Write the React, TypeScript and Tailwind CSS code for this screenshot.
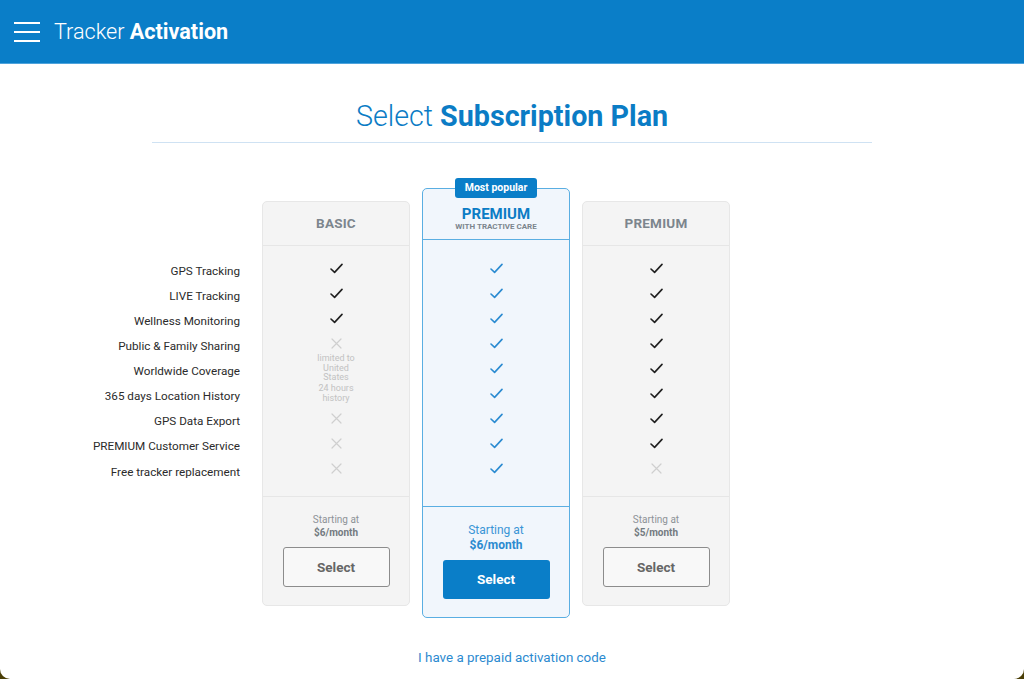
import { Fragment } from "react";

// plan comparison table for the tracker activation flow

type Cell = "check" | "cross" | string;

const features = [
    "GPS Tracking",
    "LIVE Tracking",
    "Wellness Monitoring",
    "Public & Family Sharing",
    "Worldwide Coverage",
    "365 days Location History",
    "GPS Data Export",
    "PREMIUM Customer Service",
    "Free tracker replacement",
];

const basic: Cell[] = ["check", "check", "check", "cross", "limited to United States", "24 hours history", "cross", "cross", "cross"];
const care: Cell[] = ["check", "check", "check", "check", "check", "check", "check", "check", "check"];
const premium: Cell[] = ["check", "check", "check", "check", "check", "check", "check", "check", "cross"];

function Check({ color }: { color: string }) {
    return (
        <svg width="13" height="11" viewBox="0 0 13 11" fill="none">
            <path d="M1 6 L4.6 9.4 L12 1.4" stroke={color} strokeWidth="1.6" strokeLinecap="round" strokeLinejoin="round" />
        </svg>
    );
}

function Cross() {
    return (
        <svg width="11" height="11" viewBox="0 0 11 11" fill="none">
            <path d="M1 1 L10 10 M10 1 L1 10" stroke="#cfcfcf" strokeWidth="1.2" strokeLinecap="round" />
        </svg>
    );
}

function CellView({ cell, highlight }: { cell: Cell; highlight?: boolean }) {
    return (
        <div className="h-[25.1px] flex items-center justify-center">
            <div className="-mt-[5px] flex items-center justify-center">
                {cell === "check" ? (
                    <Check color={highlight ? "#2b8bd1" : "#1f1f1f"} />
                ) : cell === "cross" ? (
                    <Cross />
                ) : (
                    <p className="w-[44px] text-center text-[9px] leading-[9.5px] text-[#c2c2c2]">{cell}</p>
                )}
            </div>
        </div>
    );
}

function PlanCard({ title, price, cells }: { title: string; price: string; cells: Cell[] }) {
    return (
        <div className="mt-[13px] w-[148px] bg-[#f4f4f4] border border-[#e7e7e7] rounded-[5px] flex flex-col">
            <div className="h-[44px] border-b border-[#e6e6e6] flex items-center justify-center">
                <span className="text-[13.5px] font-bold text-[#7c858d] tracking-[0.2px]">{title}</span>
            </div>
            <div className="pt-[12px] pb-[12px]">
                {cells.map((c, i) => (
                    <CellView key={i} cell={c} />
                ))}
            </div>
            <div className="border-t border-[#e6e6e6] h-[109px] flex flex-col items-center pt-[16px]">
                <p className="text-[10px] leading-[13px] text-[#8d9297]">Starting at</p>
                <p className="text-[10px] leading-[13px] font-bold text-[#737a80]">{price}</p>
                <button className="mt-[8px] w-[107px] h-[40px] border border-[#8c8c8c] rounded-[3px] bg-[#f8f8f8] text-[13.5px] font-bold text-[#666]">
                    Select
                </button>
            </div>
        </div>
    );
}

export default function App() {
    return (
        <div className="h-[679px] bg-[#4a3e06]" style={{ fontFamily: "Roboto, 'Liberation Sans', sans-serif" }}>
            <div className="h-full bg-white rounded-b-[10px] overflow-hidden">
                {/* top bar */}
                <div className="h-[64px] bg-[#0a7ec8] border-b border-[#4ea3dc] flex items-center pl-[14px]">
                    <div className="w-[26px] flex flex-col gap-[7px]">
                        <span className="block h-[2px] bg-white" />
                        <span className="block h-[2px] bg-white" />
                        <span className="block h-[2px] bg-white" />
                    </div>
                    <h1 className="ml-[14px] mt-[2px] text-[21.6px] text-white">
                        <span className="font-light">Tracker </span>
                        <span className="font-bold">Activation</span>
                    </h1>
                </div>

                <div className="pt-[34px] flex flex-col items-center">
                    <h2 className="text-[28.7px] leading-[36px] text-[#0b7cc5]">
                        <span className="font-light">Select </span>
                        <span className="font-bold">Subscription Plan</span>
                    </h2>
                    <div className="mt-[8px] w-[720px] h-px bg-[#cfe2f3]" />
                </div>

                {/* comparison table */}
                <div className="mt-[45px] flex items-start pl-[92px]">
                    <div className="mt-[13px] w-[148px] mr-[22px] pt-[58px] flex flex-col">
                        {features.map((f) => (
                            <div key={f} className="h-[25.1px] flex items-center justify-end text-[11.7px] text-[#2b2b2b] whitespace-nowrap">
                                {f}
                            </div>
                        ))}
                    </div>

                    <PlanCard title="BASIC" price="$6/month" cells={basic} />

                    <div className="relative ml-[12px] w-[148px] bg-[#f1f6fc] border-[1.5px] border-[#5aaee2] rounded-[5px] flex flex-col">
                        <div className="absolute -top-[11px] left-1/2 -translate-x-1/2 h-[20px] w-[82px] bg-[#0a7ec8] rounded-[3px] flex items-center justify-center">
                            <span className="text-[10.5px] font-bold text-white whitespace-nowrap">Most popular</span>
                        </div>
                        <div className="h-[51px] border-b-[1.5px] border-[#5aaee2] flex flex-col items-center justify-center pt-[9px]">
                            <span className="text-[15px] leading-[16px] font-bold text-[#0b7cc5]">PREMIUM</span>
                            <span className="text-[8px] leading-[10px] font-bold text-[#7c858d]">WITH TRACTIVE CARE</span>
                        </div>
                        <Fragment>
                            <div className="pt-[18px] pb-[22px]">
                                {care.map((c, i) => (
                                    <CellView key={i} cell={c} highlight />
                                ))}
                            </div>
                        </Fragment>
                        <div className="border-t-[1.5px] border-[#5aaee2] h-[111px] flex flex-col items-center pt-[16px]">
                            <p className="text-[12px] leading-[15px] text-[#3a95d6]">Starting at</p>
                            <p className="text-[12px] leading-[15px] font-bold text-[#2b8ad0]">$6/month</p>
                            <button className="mt-[7px] w-[107px] h-[39px] rounded-[3px] bg-[#0a7ec8] text-[13.5px] font-bold text-white">
                                Select
                            </button>
                        </div>
                    </div>

                    <div className="ml-[12px]">
                        <PlanCard title="PREMIUM" price="$5/month" cells={premium} />
                    </div>
                </div>

                <div className="mt-[30px] flex justify-center">
                    <a className="text-[13.4px] text-[#2b8ad0]">I have a prepaid activation code</a>
                </div>
            </div>
        </div>
    );
}
